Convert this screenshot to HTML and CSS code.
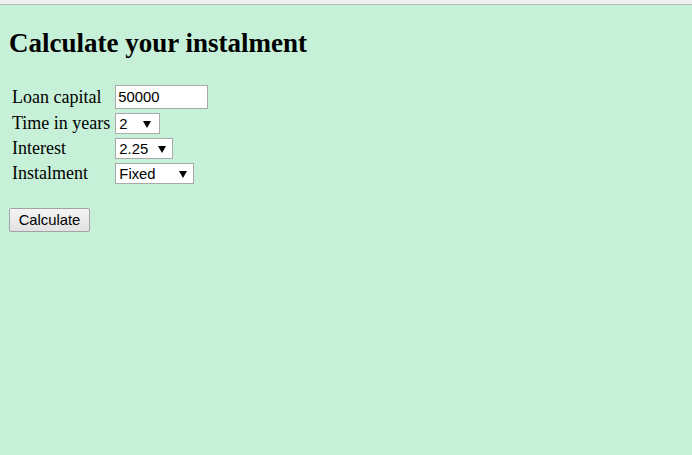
FILE: index.html
```html
<!DOCTYPE html>
<html>
<head>
<meta charset="utf-8">
<title>Calculate your instalment</title>
<link rel="stylesheet" href="styles.css">
</head>
<body>
<div class="topbar"></div>
<main class="page">
  <h2 class="title">Calculate your instalment</h2>
  <form class="calc">
    <div class="fields">
      <label class="label" for="capital">Loan capital</label>
      <input class="text-input" id="capital" type="text" value="50000">

      <label class="label" for="years">Time in years</label>
      <span class="select-wrap years"><select id="years" class="select"><option>2</option><option>3</option><option>5</option><option>10</option></select></span>

      <label class="label" for="interest">Interest</label>
      <span class="select-wrap interest"><select id="interest" class="select"><option>2.25</option><option>2.50</option><option>3.00</option></select></span>

      <label class="label" for="instalment">Instalment</label>
      <span class="select-wrap instalment"><select id="instalment" class="select"><option>Fixed</option><option>Annuity</option></select></span>
    </div>
    <div class="actions">
      <button type="button" class="button">Calculate</button>
    </div>
  </form>
</main>
</body>
</html>
```
FILE: styles.css
```css
html, body {
  margin: 0;
  padding: 0;
  height: 100%;
}

body {
  background: #c6f0d7;
  font-family: "Liberation Serif", "Times New Roman", serif;
  font-size: 18px;
  color: #000;
  display: flex;
  flex-direction: column;
}

.topbar {
  height: 4px;
  background: #f0f0f0;
  border-bottom: 1px solid #b9b9b9;
  flex: none;
}

.page {
  padding: 0 8px;
  flex: 1;
}

.title {
  font-size: 27px;
  font-weight: bold;
  margin: 23px 0 0 1px;
  line-height: 31px;
}

.calc {
  margin-top: 26px;
}

.fields {
  display: grid;
  grid-template-columns: auto auto;
  justify-content: start;
  align-items: center;
  column-gap: 5px;
  row-gap: 4px;
  padding-left: 4px;
}

.label {
  line-height: 21px;
  white-space: nowrap;
}

.text-input {
  box-sizing: border-box;
  width: 93px;
  height: 24px;
  margin: 0;
  padding: 0 2px;
  border: 1px solid #a9a9a9;
  background: #fff;
  font-family: "Liberation Sans", Arial, sans-serif;
  font-size: 14.8px;
  color: #000;
  outline: none;
}

.select-wrap {
  position: relative;
  display: inline-block;
  justify-self: start;
  height: 21px;
}

.select-wrap::after {
  content: "";
  position: absolute;
  top: 8px;
  right: 9px;
  border-left: 4px solid transparent;
  border-right: 4px solid transparent;
  border-top: 7px solid #000;
  pointer-events: none;
}

.select {
  -webkit-appearance: none;
  appearance: none;
  box-sizing: border-box;
  height: 21px;
  margin: 0;
  padding: 0 0 0 3px;
  border: 1px solid #a9a9a9;
  border-radius: 0;
  background: #fff;
  font-family: "Liberation Sans", Arial, sans-serif;
  font-size: 14.8px;
  color: #000;
  outline: none;
  display: block;
}

.years .select { width: 45px; }
.interest .select { width: 58px; }
.instalment .select { width: 79px; }

.interest::after { right: 7px; }
.instalment::after { right: 7px; }

.actions {
  margin-top: 24px;
  padding-left: 1px;
}

.button {
  box-sizing: border-box;
  width: 81px;
  height: 24px;
  margin: 0;
  padding: 0;
  border: 1px solid #a3a3a3;
  border-radius: 2px;
  background: linear-gradient(#f4f4f4, #e2e2e2);
  font-family: "Liberation Sans", Arial, sans-serif;
  font-size: 14.8px;
  color: #000;
}
```
